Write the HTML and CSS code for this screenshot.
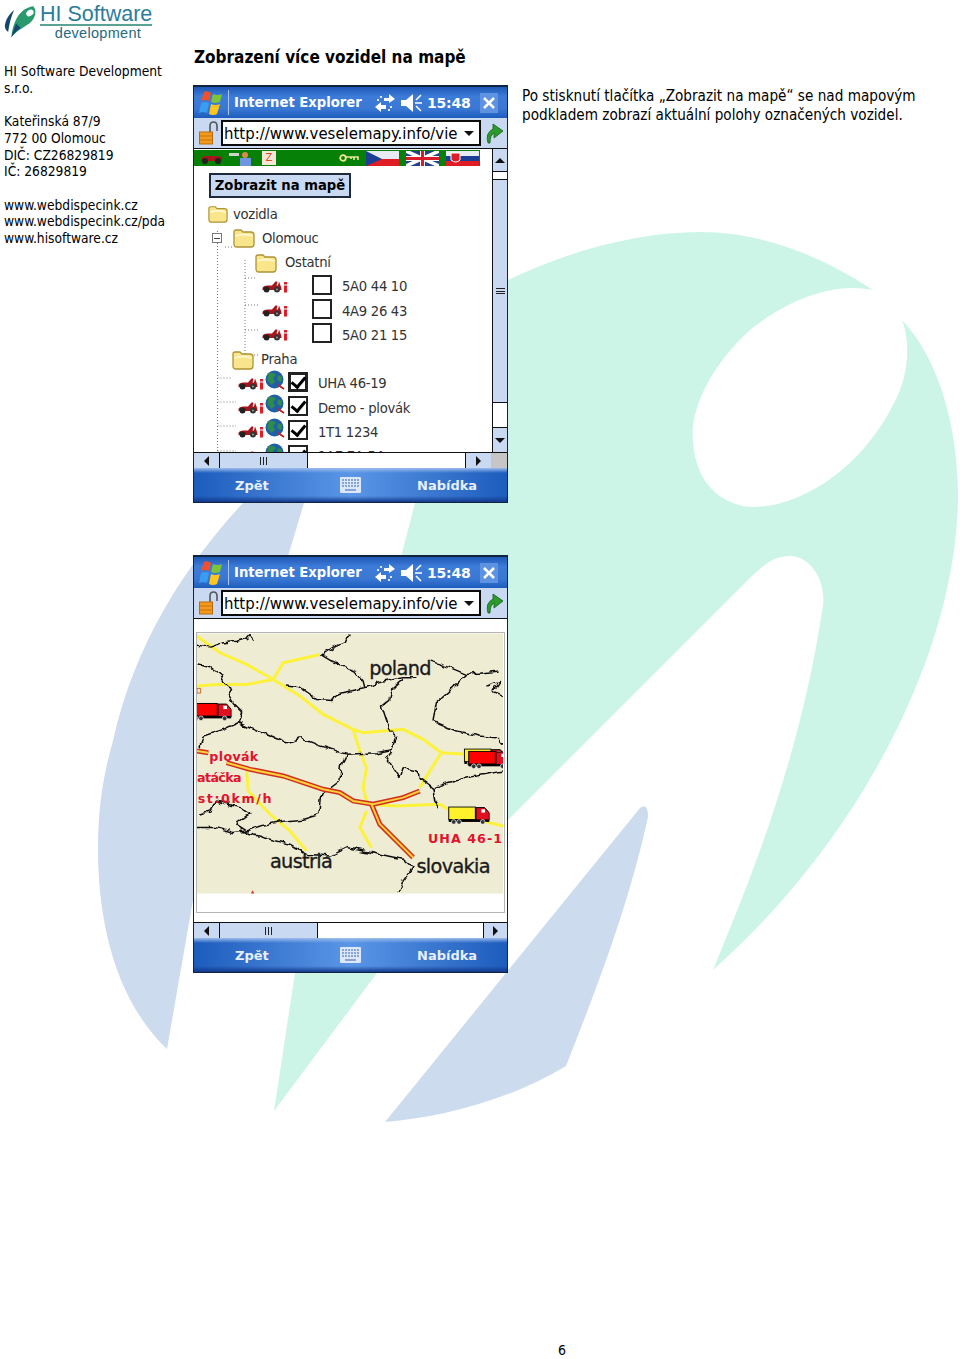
FILE: index.html

```html
<!DOCTYPE html>
<html lang="cs">
<head>
  <meta charset="UTF-8">
  <meta name="viewport" content="width=device-width, initial-scale=1.0">
  <title>Zobrazení více vozidel na mapě | HI Software</title>
  <link rel="stylesheet" href="styles.css">
</head>
<body>
  <!-- shared icons -->
  <svg class="defs" width="0" height="0">
    <filter id="jag" x="-5%" y="-5%" width="110%" height="110%">
      <feTurbulence type="fractalNoise" baseFrequency="0.05" numOctaves="1" seed="4" result="n"/>
      <feDisplacementMap in="SourceGraphic" in2="n" scale="22" xChannelSelector="R" yChannelSelector="G"/>
    </filter>
    <symbol id="i-flag" viewBox="0 0 24 26">
      <path d="M5 2 Q8 0 12 3 L10 11 Q6 9 2 11Z" fill="#f0502a"/>
      <path d="M14 4 Q18 6 23 4 L21 12 Q16 14 12 12Z" fill="#7cc43a"/>
      <path d="M2 13 Q6 11 10 13 L8 23 Q4 21 0 23Z" fill="#3a9cf0"/>
      <path d="M12 14 Q16 16 21 14 L18 24 Q14 26 10 24Z" fill="#ffc61e"/>
    </symbol>
    <symbol id="i-sync" viewBox="0 0 20 20">
      <path d="M9 5H14V1L20 6 14 10V8H9Z" fill="#fff"/>
      <path d="M11 12H6V9L0 14 6 19V16H11Z" fill="#fff"/>
      <path d="M2 6h2v2h-2zM5 3h2v2h-2zM15 13h2v2h-2zM13 16h2v2h-2z" fill="#dbe6f7"/>
    </symbol>
    <symbol id="i-sound" viewBox="0 0 22 18">
      <path d="M0 6H5L12 0V18L5 12H0Z" fill="#fff"/>
      <path d="M20 1L15 6M14 9H21M15 12L20 17" stroke="#fff" stroke-width="1.5" fill="none"/>
    </symbol>
    <symbol id="i-lock" viewBox="0 0 20 24">
      <path d="M11 12V5Q11 1 14.500 1T18 5V10" fill="none" stroke="#555" stroke-width="1.600"/>
      <rect x="0.500" y="11" width="13" height="12" fill="#f29a1e" stroke="#b96a10"/>
      <path d="M1 15H13M1 19H13" stroke="#c9720f"/>
    </symbol>
    <symbol id="i-go" viewBox="0 0 18 22">
      <path d="M3 21Q0 11 8 7V2L18 9 9 16V11Q5 13 5 21Z" fill="#2c9a2c" stroke="#14601a" stroke-width="0.800"/>
    </symbol>
    <symbol id="i-keys" viewBox="0 0 21 16">
      <rect width="21" height="16" rx="1" fill="#dce8fa"/>
      <path d="M2 3h17M2 6h17M2 9h17" stroke="#6c8fc4" stroke-width="1.500" stroke-dasharray="2 1"/>
      <path d="M5 13h11" stroke="#6c8fc4" stroke-width="1.500"/>
    </symbol>
    <symbol id="i-folder" viewBox="0 0 22 20">
      <path d="M1 16V4Q1 2 3 2H8L10 4H18Q21 4 21 7V16Q21 19 18 19H4Q1 19 1 16Z" fill="#f9e68c" stroke="#ad9434" stroke-width="1.300"/>
      <path d="M2.500 8Q11 5 19.500 8" stroke="#fff8d2" stroke-width="1.800" fill="none"/>
    </symbol>
    <symbol id="i-car" viewBox="0 0 26 14">
      <path d="M0.500 9Q1 6.500 6 6.500H10L13.500 2.500H15.500L14.500 6.500H16L17 2.500 18.500 6.500Q19.500 8 19.500 11H0.500Z" fill="#a8141c"/>
      <circle cx="4.500" cy="10.500" r="3" fill="#222"/>
      <circle cx="15" cy="10.500" r="3" fill="#333"/>
      <circle cx="15" cy="10.500" r="1" fill="#999"/>
      <path d="M22 3h3v2.500h-3zM22 6.500h3v7h-3z" fill="#e01c24"/>
    </symbol>
    <symbol id="i-globe" viewBox="0 0 20 20">
      <circle cx="9.500" cy="9.500" r="9" fill="#1f5fa8"/>
      <path d="M4 3Q9 2 11 5L8 8 10 12 6 15 2 9ZM13 5L17 7 16 12 12 10Z" fill="#2e8b4a"/>
      <path d="M13 15L19 19" stroke="#c8202a" stroke-width="2"/>
    </symbol>
    <symbol id="i-truck" viewBox="0 0 125 56">
      <rect x="2" y="2" width="80" height="38" fill="currentColor" stroke="#000" stroke-width="3"/>
      <path d="M84 4H110L124 20V42H84Z" fill="#e01020" stroke="#000" stroke-width="3"/>
      <rect x="100" y="9" width="11" height="10" fill="#fff"/>
      <rect x="2" y="40" width="122" height="7" fill="#000"/>
      <circle cx="17" cy="47" r="7" fill="#333" stroke="#fff" stroke-width="2"/>
      <circle cx="33" cy="47" r="7" fill="#333" stroke="#fff" stroke-width="2"/>
      <circle cx="104" cy="47" r="7" fill="#333" stroke="#fff" stroke-width="2"/>
    </symbol>
  </svg>

  <!-- company mark behind the page -->
  <svg class="watermark" viewBox="0 0 960 1359" width="960" height="1359">
    <path fill="#ccf5e8" d="M508 280 C570 250 640 232 700 232 C770 232 830 262 873 290 C835 282 790 298 750 330 C715 362 690 405 693 440 C695 490 730 507 753 507 C800 507 860 470 893 405 C910 375 910 340 902 320 C940 360 958 430 958 495 C958 640 870 830 713 970 C750 880 800 760 823 605 C826 580 810 556 790 556 C770 556 760 570 753 575 L633 695 L508 820 L377 973 L274 1111 L295 973 L402 553 L415 503 Z"/>
    <path fill="#ccdcee" d="M167 1049 C115 1000 98 920 98 850 C98 800 105 770 113 741 C135 640 190 560 243 503 L304 503 L289 553 L193 900 Z"/>
    <path fill="#ccdcee" d="M385 1122 L640 808 Q648 802 648 817 C630 900 600 980 566 1066 C510 1100 440 1118 385 1122 Z"/>
  </svg>

  <div class="page">
    <div class="content">
      <aside class="side">
        <div class="logo">
          <svg class="logo-mark" viewBox="12 14 108 100" width="36" height="33">
            <path d="M14 78 C16 58 28 40 42 30 C32 50 27 75 24 96 C18 92 14 86 14 78Z" fill="#14486c"/>
            <path d="M34 112 C38 70 55 25 100 18 C112 30 108 55 88 70 C70 82 50 92 34 112Z" fill="#2a9a6e"/>
            <path d="M34 112 C38 95 42 85 48 70 L62 84 C50 92 42 100 34 112Z" fill="#14486c"/>
            <ellipse cx="90" cy="38" rx="12" ry="9" transform="rotate(-35 90 38)" fill="#fff"/>
          </svg>
          <div class="logo-text">
            <div class="logo-name">HI Software</div>
            <div class="logo-sub">development</div>
          </div>
        </div>
        <p>HI Software Development<br>s.r.o.</p>
        <p>Kateřinská 87/9<br>772 00 Olomouc<br>DIČ: CZ26829819<br>IČ: 26829819</p>
        <p>www.webdispecink.cz<br>www.webdispecink.cz/pda<br>www.hisoftware.cz</p>
      </aside>

      <main class="main">
        <h1>Zobrazení více vozidel na mapě</h1>
        <div class="row">
          <div class="screens">

            <div class="screen">
              <div class="titlebar">
                <svg class="t-flag"><use href="#i-flag"/></svg>
                <span class="t-name">Internet Explorer</span>
                <svg class="t-sync"><use href="#i-sync"/></svg>
                <svg class="t-sound"><use href="#i-sound"/></svg>
                <span class="t-time">15:48</span>
                <span class="t-close"><svg viewBox="0 0 12 12" width="12" height="12"><path d="M1 1L11 11M11 1L1 11" stroke="#fff" stroke-width="2.500"/></svg></span>
              </div>
              <div class="addressbar">
                <svg class="a-lock"><use href="#i-lock"/></svg>
                <div class="a-input"><span>http://www.veselemapy.info/vie</span><i class="tri-down"></i></div>
                <svg class="a-go"><use href="#i-go"/></svg>
              </div>
              <div class="body">
                <div class="pane">
                  <div class="strip">
                    <svg class="s-car" viewBox="0 0 22 12" width="22" height="12"><path d="M0 8Q1 4 5 4H15L21 5V9H0Z" fill="#a8141c"/><circle cx="4" cy="9" r="3" fill="#222"/><circle cx="17" cy="9" r="3" fill="#222"/></svg>
                    <svg class="s-pers" viewBox="0 0 24 15" width="24" height="15"><rect x="0" y="2" width="10" height="3" fill="#cfd4c8"/><circle cx="16" cy="4" r="3" fill="#d98a4c"/><rect x="11" y="7" width="11" height="8" fill="#6f94e0"/></svg>
                    <span class="s-z">Z</span>
                    <svg class="s-key" viewBox="0 0 20 8" width="20" height="8"><circle cx="4" cy="4" r="2.800" fill="none" stroke="#f4e59c" stroke-width="1.800"/><path d="M7 3H19V6M15 3V6M12 3V5" fill="none" stroke="#f4e59c" stroke-width="1.600"/></svg>
                    <svg class="s-fl" viewBox="0 0 33 15" width="33" height="15"><rect width="33" height="8" fill="#e8ecf2"/><rect y="8" width="33" height="7" fill="#e01c24"/><path d="M0 0L16 8 0 15Z" fill="#1c3f94"/></svg>
                    <svg class="s-fl" viewBox="0 0 33 15" width="33" height="15"><rect width="33" height="15" fill="#24408e"/><path d="M0 0L33 15M33 0L0 15" stroke="#fff" stroke-width="3.500"/><path d="M16.500 0V15M0 7.500H33" stroke="#fff" stroke-width="5"/><path d="M16.500 0V15M0 7.500H33" stroke="#d81c2c" stroke-width="3"/></svg>
                    <svg class="s-fl" viewBox="0 0 33 15" width="33" height="15"><rect width="33" height="5" fill="#e8ecf2"/><rect y="5" width="33" height="5" fill="#1c3f94"/><rect y="10" width="33" height="5" fill="#e01c24"/><path d="M5 2H14V9Q10 13 5 9Z" fill="#e01c24" stroke="#fff"/></svg>
                  </div>
                  <button class="btn-map">Zobrazit na mapě</button>
                  <div class="tree">
                    <svg class="tree-lines" width="298" height="280">
                      <path d="M23.500 33V280M31 49H38M51 62V163M51 80H61M51 107H66M51 132H66M51 157H66M23.500 180H38M23.500 204H42M23.500 228H42M23.500 253H42" stroke="#777" stroke-dasharray="1 2" fill="none"/>
                    </svg>
                    <div class="node n-root"><svg class="folder"><use href="#i-folder"/></svg><span>vozidla</span></div>
                    <div class="node n-city"><span class="minus"></span><svg class="folder"><use href="#i-folder"/></svg><span>Olomouc</span></div>
                    <div class="node n-sub"><svg class="folder"><use href="#i-folder"/></svg><span>Ostatní</span></div>
                    <div class="node n-car"><svg class="car"><use href="#i-car"/></svg><b class="check"></b><span>5A0 44 10</span></div>
                    <div class="node n-car"><svg class="car"><use href="#i-car"/></svg><b class="check"></b><span>4A9 26 43</span></div>
                    <div class="node n-car"><svg class="car"><use href="#i-car"/></svg><b class="check"></b><span>5A0 21 15</span></div>
                    <div class="node n-town"><svg class="folder"><use href="#i-folder"/></svg><span>Praha</span></div>
                    <div class="node n-on"><svg class="car"><use href="#i-car"/></svg><svg class="globe"><use href="#i-globe"/></svg><b class="check on focus"></b><span>UHA 46-19</span></div>
                    <div class="node n-on"><svg class="car"><use href="#i-car"/></svg><svg class="globe"><use href="#i-globe"/></svg><b class="check on"></b><span>Demo - plovák</span></div>
                    <div class="node n-on"><svg class="car"><use href="#i-car"/></svg><svg class="globe"><use href="#i-globe"/></svg><b class="check on"></b><span>1T1 1234</span></div>
                    <div class="node n-on"><svg class="car"><use href="#i-car"/></svg><svg class="globe"><use href="#i-globe"/></svg><b class="check on"></b><span>1AE 7A 54</span></div>
                  </div>
                </div>
                <div class="vscroll">
                  <div class="sb-btn"><i class="tri-up"></i></div>
                  <div class="v-gap"></div>
                  <div class="v-thumb"><i class="grip-h"></i></div>
                  <div class="v-rest"></div>
                  <div class="sb-btn v-last"><i class="tri-down"></i></div>
                </div>
              </div>
              <div class="hscroll">
                <div class="sb-side"><i class="tri-left"></i></div>
                <div class="h-thumb"><i class="grip-v"></i></div>
                <div class="h-rest"></div>
                <div class="sb-side"><i class="tri-right"></i></div>
                <div class="h-corner"></div>
              </div>
              <div class="menubar">
                <span class="m-back">Zpět</span>
                <svg class="m-keys"><use href="#i-keys"/></svg>
                <span class="m-menu">Nabídka</span>
              </div>
            </div>

            <div class="screen">
              <div class="titlebar">
                <svg class="t-flag"><use href="#i-flag"/></svg>
                <span class="t-name">Internet Explorer</span>
                <svg class="t-sync"><use href="#i-sync"/></svg>
                <svg class="t-sound"><use href="#i-sound"/></svg>
                <span class="t-time">15:48</span>
                <span class="t-close"><svg viewBox="0 0 12 12" width="12" height="12"><path d="M1 1L11 11M11 1L1 11" stroke="#fff" stroke-width="2.500"/></svg></span>
              </div>
              <div class="addressbar">
                <svg class="a-lock"><use href="#i-lock"/></svg>
                <div class="a-input"><span>http://www.veselemapy.info/vie</span><i class="tri-down"></i></div>
                <svg class="a-go"><use href="#i-go"/></svg>
              </div>
              <div class="body body-map">
                <div class="mapbox">
                  <svg class="map" viewBox="21 27 919 781" width="306" height="261">
                    <rect x="21" y="27" width="919" height="781" fill="#efecd4"/>
                    <g class="roads">
                      <path d="M21 35L90 85 170 120 250 165 330 215 400 270 490 315 520 325 640 315 700 345 755 385 830 390"/>
                      <path d="M21 185L80 180 170 180 250 165 280 115 390 90"/>
                      <path d="M490 315L510 380 530 430 520 490 530 530"/>
                      <path d="M755 385L720 440 690 490"/>
                      <path d="M530 540L620 545 750 540 800 570 940 605"/>
                      <path d="M530 560L510 610 545 670"/>
                      <path d="M170 440L175 500 240 570 300 620 350 680"/>
                    </g>
                    <g class="borders">
                      <path d="M21 62L60 68 100 55 140 50 170 42 180 30 192 45"/>
                      <path d="M478 30L470 50 430 68 395 92 425 110 470 130 500 145 520 170 525 190 480 200 440 210 430 228 380 225 330 190 285 185"/>
                      <path d="M21 120L60 130 90 150 110 185 125 195 115 210 130 235 155 260 145 295"/>
                      <path d="M145 295L200 320 240 335 290 355 330 340 380 360 440 380 470 390 455 420 450 470 410 500"/>
                      <path d="M145 295L100 315 40 335 30 370"/>
                      <path d="M525 190L570 175 610 165 640 160 680 160"/>
                      <path d="M640 165L610 190 600 225 575 245 590 290 600 320 620 340 605 380 590 400 610 430 630 460 640 430 680 440 690 460 730 490 790 470 830 460 890 450 940 440"/>
                      <path d="M720 110L770 125 830 150 880 145 930 140"/>
                      <path d="M830 150L780 200 740 235 730 290 800 320 870 335 920 340 940 360"/>
                      <path d="M890 185L930 170 910 200 940 215"/>
                      <path d="M470 390L560 385 610 375"/>
                      <path d="M21 610L80 610 130 625 170 620 140 600 180 570 150 550 80 530 60 560 30 570"/>
                      <path d="M170 620L230 600 280 590 340 585 390 570 395 510 410 500"/>
                      <path d="M150 620L220 640 300 660 350 690 420 695 470 670 520 680 570 690 640 705 670 730 640 770 625 805"/>
                      <path d="M730 490L735 530 750 550"/>
                    </g>
                    <g class="route-out">
                      <path d="M21 380L55 385"/>
                      <path d="M110 415L180 435 280 455 400 495 450 505 490 530 550 540 640 520 690 500"/>
                      <path d="M545 540L570 600 670 700"/>
                    </g>
                    <g class="route-in">
                      <path d="M21 380L55 385"/>
                      <path d="M110 415L180 435 280 455 400 495 450 505 490 530 550 540 640 520 690 500"/>
                      <path d="M545 540L570 600 670 700"/>
                    </g>
                    <use href="#i-truck" class="tk-red" x="0" y="235" width="125" height="56"/>
                    <use href="#i-truck" class="tk-yellow" x="822" y="372" width="125" height="56"/>
                    <use href="#i-truck" class="tk-red" x="835" y="379" width="125" height="56"/>
                    <use href="#i-truck" class="tk-yellow" x="775" y="546" width="125" height="56"/>
                    <text class="m-label" x="538" y="152">poland</text>
                    <text class="m-label" x="240" y="730">austria</text>
                    <text class="m-label" x="680" y="745">slovakia</text>
                    <text class="m-red" x="58" y="411" textLength="147">plovák</text>
                    <text class="m-red" x="21" y="472" textLength="134">atáčka</text>
                    <text class="m-red" x="-8" y="535" textLength="253">ost:0km/h</text>
                    <text class="m-red" x="715" y="655" textLength="222">UHA 46-1</text>
                    <path d="M183 808L188 798 193 808Z" fill="#c0392b"/>
                    <path d="M21 192H32V206H21Z" fill="none" stroke="#d06a20" stroke-width="3"/>
                  </svg>
                </div>
              </div>
              <div class="hscroll">
                <div class="sb-side"><i class="tri-left"></i></div>
                <div class="h-thumb h-thumb-wide"><i class="grip-v"></i></div>
                <div class="h-rest"></div>
                <div class="sb-side sb-last"><i class="tri-right"></i></div>
              </div>
              <div class="menubar">
                <span class="m-back">Zpět</span>
                <svg class="m-keys"><use href="#i-keys"/></svg>
                <span class="m-menu">Nabídka</span>
              </div>
            </div>

          </div>
          <p class="desc">Po stisknutí tlačítka „Zobrazit na mapě“ se nad mapovým podkladem zobrazí aktuální polohy označených vozidel.</p>
        </div>
      </main>
    </div>
    <footer class="pageno">6</footer>
  </div>
</body>
</html>
```

FILE: styles.css

```css
* {
  box-sizing: border-box;
}
html, body {
  margin: 0;
}
body {
  color: #000;
  font-family: "DejaVu Sans Condensed", "DejaVu Sans", sans-serif;
  font-stretch: condensed;
  position: relative;
}
.defs {
  position: absolute;
}
.watermark {
  position: absolute;
  left: 0;
  top: 0;
  z-index: -1;
}
.page {
  height: 1359px;
  display: flex;
  flex-direction: column;
  overflow: hidden;
}
.content {
  flex: 1;
  display: flex;
}

/* left column */
.side {
  width: 193px;
  padding: 5px 0 0 4px;
  font-size: 13.700px;
  line-height: 16.7px;
}
.side p {
  margin: 0 0 16.7px;
}
.logo {
  display: flex;
  height: 58px;
}
.logo-mark {
  flex: none;
}
.logo-text {
  width: 112px;
}
.logo-name {
  font-family: "Liberation Sans", sans-serif;
  font-stretch: normal;
  font-size: 21.500px;
  line-height: 19px;
  color: #2b7d9b;
  border-bottom: 2px solid #5aa394;
  height: 21px;
  white-space: nowrap;
}
.logo-sub {
  font-family: "Liberation Sans", sans-serif;
  font-stretch: normal;
  font-size: 14.500px;
  line-height: 15px;
  text-align: center;
  color: #256a80;
  padding-left: 4px;
  letter-spacing: 0.3px;
}

/* main column */
.main {
  padding-top: 46px;
}
h1 {
  margin: 0 0 17px 1px;
  font-size: 17px;
  line-height: 22px;
  font-weight: bold;
  white-space: nowrap;
}
.row {
  display: flex;
}
.screens {
  width: 315px;
  flex: none;
}
.desc {
  margin: 2px 0 0 14px;
  width: 420px;
  font-size: 15.150px;
  line-height: 18.8px;
}
.pageno {
  height: 17px;
  padding-left: 558px;
  font-size: 14px;
  line-height: 16px;
}

/* pda window */
.screen {
  height: 418px;
  margin-bottom: 52px;
  display: flex;
  flex-direction: column;
  background-color: #fff;
  border: 1px solid #10233f;
  border-top-width: 2px;
  font-stretch: normal;
  font-family: "DejaVu Sans", sans-serif;
}
.titlebar {
  height: 31px;
  flex: none;
  display: flex;
  align-items: center;
  color: #fff;
  font-weight: bold;
  background: linear-gradient(#1d58b4, #3d7bd8 30%, #3a78d4 70%, #1c5cbc);
}
.t-flag {
  width: 24px;
  height: 26px;
  margin-left: 5px;
}
.t-name {
  margin-left: 5px;
  padding-left: 5px;
  width: 147px;
  font-size: 13.200px;
  line-height: 25px;
  border-left: 1px solid #a9c6ef;
  white-space: nowrap;
}
.t-sync {
  width: 20px;
  height: 20px;
}
.t-sound {
  width: 22px;
  height: 18px;
  margin-left: 6px;
}
.t-time {
  margin-left: 4px;
  width: 53px;
  font-size: 14px;
  letter-spacing: -0.2px;
}
.t-close {
  width: 18px;
  height: 20px;
  display: flex;
  align-items: center;
  justify-content: center;
  background-color: #5d93e0;
}
.addressbar {
  height: 31px;
  flex: none;
  display: flex;
  align-items: center;
  background-color: #c9d9f1;
  border-bottom: 1px solid #111;
}
.a-lock {
  width: 20px;
  height: 24px;
  margin-left: 5px;
}
.a-input {
  width: 260px;
  height: 26px;
  margin-left: 2px;
  padding: 0 5px 0 1px;
  display: flex;
  align-items: center;
  justify-content: space-between;
  background-color: #fff;
  border: 2px solid #0c0c0c;
  font-family: "DejaVu Sans Condensed", "DejaVu Sans", sans-serif;
  font-stretch: condensed;
  font-size: 16.600px;
  white-space: nowrap;
  overflow: hidden;
}
.a-go {
  width: 18px;
  height: 22px;
  margin-left: 4px;
}

/* arrows */
.tri-down, .tri-up, .tri-left, .tri-right {
  display: block;
  width: 0;
  height: 0;
  flex: none;
  border-style: solid;
  border-color: transparent;
}
.tri-down {
  border-width: 5px 5px 0;
  border-top-color: #111;
}
.tri-up {
  border-width: 0 5px 5px;
  border-bottom-color: #111;
}
.tri-left {
  border-width: 5px 5px 5px 0;
  border-right-color: #111;
}
.tri-right {
  border-width: 5px 0 5px 5px;
  border-left-color: #111;
}

/* screen body */
.body {
  flex: 1;
  min-height: 0;
  display: flex;
}
.pane {
  flex: 1;
  min-width: 0;
  overflow: hidden;
}
.strip {
  width: 286px;
  height: 16px;
  margin-top: 1px;
  background-color: #078007;
  display: flex;
  align-items: center;
  overflow: hidden;
}
.s-car {
  margin-left: 7px;
}
.s-pers {
  margin-left: 6px;
}
.s-z {
  width: 14px;
  height: 14px;
  margin-left: 9px;
  background-color: #f4e7d8;
  color: #d0512c;
  font-size: 10px;
  line-height: 14px;
  text-align: center;
}
.s-key {
  margin-left: 63px;
}
.s-fl {
  margin-left: 7px;
}
.btn-map {
  display: block;
  margin: 7px 0 0 15px;
  width: 142px;
  height: 25px;
  padding: 0;
  background-color: #c9d9f1;
  border: 2px solid #1e2a3c;
  color: #000;
  font-family: "DejaVu Sans", sans-serif;
  font-weight: bold;
  font-size: 13.200px;
  line-height: 20px;
}
.tree {
  position: relative;
  height: 257px;
  padding-top: 4px;
  overflow: hidden;
  font-size: 13.200px;
  color: #333;
  letter-spacing: -0.3px;
}
.tree-lines {
  position: absolute;
  left: 0;
  top: 0;
}
.node {
  position: relative;
  height: 24.250px;
  display: flex;
  align-items: center;
  white-space: nowrap;
}
.folder {
  width: 22px;
  height: 20px;
  flex: none;
  margin-right: 6px;
}
.car {
  width: 26px;
  height: 14px;
  flex: none;
  margin-top: -2px;
}
.globe {
  width: 20px;
  height: 20px;
  flex: none;
  margin: -8px 0 0 1px;
}
.check {
  width: 20px;
  height: 20px;
  flex: none;
  border: 2px solid #222;
  background-color: #fff;
  margin-right: 10px;
  margin-top: -4px;
  position: relative;
}
.check.on::after {
  content: "";
  position: absolute;
  left: 4px;
  top: 0;
  width: 6px;
  height: 11px;
  border: solid #000;
  border-width: 0 3px 3px 0;
  transform: rotate(40deg);
}
.check.focus {
  border-width: 3px;
}
.check.focus::after {
  left: 3px;
  top: -1px;
}
.n-root {
  padding-left: 14px;
}
.n-root .folder {
  width: 20px;
  margin-right: 5px;
}
.n-city {
  padding-left: 18px;
}
.n-city .folder {
  margin-left: 11px;
  margin-right: 7px;
}
.minus {
  width: 10px;
  height: 10px;
  flex: none;
  border: 1px solid #777;
  background: linear-gradient(#444, #444) center / 6px 1px no-repeat #fff;
}
.n-sub {
  padding-left: 61px;
}
.n-sub .folder {
  margin-right: 8px;
}
.n-car {
  padding-left: 68px;
}
.n-car .check {
  margin-left: 24px;
}
.n-town {
  padding-left: 38px;
}
.n-town .folder {
  margin-right: 7px;
}
.n-on {
  padding-left: 44px;
}
.n-on .check {
  margin-left: 3px;
}
.vscroll {
  width: 15px;
  flex: none;
  margin-right: 0;
  display: flex;
  flex-direction: column;
  border-left: 1px solid #111;
}
.sb-btn {
  height: 23px;
  display: flex;
  align-items: center;
  justify-content: center;
  background-color: #c9d9f1;
  border-bottom: 1px solid #111;
}
.v-last {
  height: 25px;
  border-bottom: 0;
  border-top: 1px solid #111;
}
.v-gap {
  height: 7px;
  background-color: #fff;
}
.v-thumb {
  height: 224px;
  display: flex;
  align-items: center;
  justify-content: center;
  background-color: #c9d9f1;
  border-top: 1px solid #111;
  border-bottom: 1px solid #111;
}
.grip-h {
  width: 9px;
  height: 6px;
  border-top: 1px solid #222;
  border-bottom: 1px solid #222;
  background: linear-gradient(#222, #222) center / 9px 1px no-repeat;
}
.grip-v {
  width: 7px;
  height: 8px;
  border-left: 1px solid #222;
  border-right: 1px solid #222;
  background: linear-gradient(#222, #222) center / 1px 8px no-repeat;
}
.v-rest {
  flex: 1;
  background-color: #fff;
}
.hscroll {
  height: 16px;
  flex: none;
  display: flex;
  border-top: 1px solid #111;
  background-color: #fff;
}
.sb-side {
  width: 26px;
  display: flex;
  align-items: center;
  justify-content: center;
  background-color: #c9d9f1;
}
.sb-side:first-child {
  border-right: 1px solid #111;
}
.sb-side:not(:first-child) {
  border-left: 1px solid #111;
}
.h-thumb {
  width: 88px;
  display: flex;
  align-items: center;
  justify-content: center;
  background-color: #c9d9f1;
  border-right: 1px solid #111;
}
.h-thumb-wide {
  width: 98px;
}
.h-rest {
  flex: 1;
}
.h-corner {
  width: 16px;
  background-color: #c6c6c6;
}
.sb-last {
  width: 24px;
}
.menubar {
  height: 34px;
  flex: none;
  display: flex;
  align-items: center;
  color: #e8f0ff;
  font-weight: bold;
  font-size: 13px;
  background:
    linear-gradient(#9dbcec 0, rgba(157, 188, 236, 0) 5px, rgba(0, 0, 0, 0) 28px, #12398a 34px),
    linear-gradient(90deg, #1c5cbc, #5b96e6 50%, #1c5cbc);
}
.m-back {
  margin-left: 41px;
  width: 105px;
}
.m-keys {
  width: 21px;
  height: 16px;
  flex: none;
}
.m-menu {
  margin-left: 56px;
}

/* map screen */
.body-map {
  padding: 13px 2px 9px;
}
.mapbox {
  width: 309px;
  height: 100%;
  margin: 0;
  border: 1px solid #b5b5b5;
  overflow: hidden;
}
.map {
  display: block;
  overflow: hidden;
}
.roads path {
  fill: none;
  stroke: #fdf23a;
  stroke-width: 9;
}
.borders {
  filter: url(#jag);
}
.borders path {
  fill: none;
  stroke: #111;
  stroke-width: 4.500;
  stroke-linejoin: bevel;
}
.route-out path {
  fill: none;
  stroke: #d22d1c;
  stroke-width: 15;
}
.route-in path {
  fill: none;
  stroke: #fbd23a;
  stroke-width: 6;
}
.tk-red {
  color: #f00;
}
.tk-yellow {
  color: #fff22a;
}
.m-label {
  font-family: "DejaVu Sans", sans-serif;
  font-size: 58px;
  fill: #1a1a1a;
  stroke: #1a1a1a;
  stroke-width: 1;
  letter-spacing: -2px;
}
.m-red {
  font-family: "DejaVu Sans", sans-serif;
  font-weight: bold;
  font-size: 38px;
  fill: #e0142c;
}
```
